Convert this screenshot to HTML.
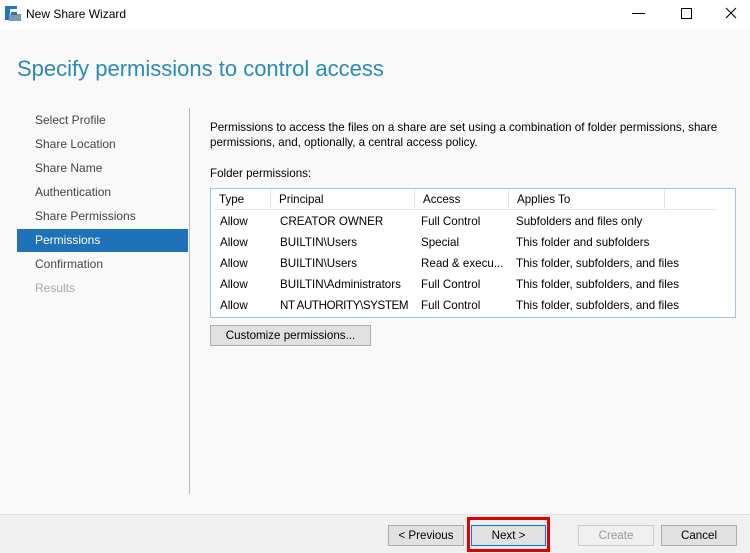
<!DOCTYPE html>
<html><head><style>
*{margin:0;padding:0;box-sizing:border-box}
body{width:750px;height:553px;overflow:hidden;background:#f9f9f9;font-family:"Liberation Sans",sans-serif;font-size:11.6px;color:#000;position:relative}
.a{position:absolute;white-space:nowrap}
.tb{position:absolute;left:0;top:0;width:750px;height:29px;background:#fff}
.nav{left:35px;color:#444;font-size:12px}
.btn{position:absolute;height:21px;border:1px solid #adadad;background:#e1e1e1;text-align:center;line-height:19px}
.hd{position:absolute;top:0;height:21px;border-right:1px solid #e5e5e5;padding-left:8px;line-height:22px}
.row{position:absolute;left:0;height:21px;line-height:21px}
.row span{position:absolute}
</style></head><body>
<div class="tb"></div>
<svg class="a" style="left:5px;top:6px" width="16" height="16"><rect x="0" y="0" width="5" height="14" fill="#1e78c8"/><rect x="0" y="0" width="12" height="3" fill="#1e78c8"/><rect x="4" y="8" width="12" height="7" fill="#7a9ab5"/><rect x="6" y="6" width="6" height="3" fill="#4a6a85"/></svg>
<div class="a" style="left:26px;top:7px;font-size:12px">New Share Wizard</div>
<svg class="a" style="left:625px;top:5px" width="120" height="18"><line x1="7" y1="8.5" x2="20" y2="8.5" stroke="#000"/><rect x="56.5" y="3.5" width="10" height="10" fill="none" stroke="#000"/><path d="M101 3 L111 13 M111 3 L101 13" stroke="#000" stroke-width="1.1"/></svg>
<div class="a" style="left:17px;top:56px;font-size:22px;color:#2a8ab8">Specify permissions to control access</div>
<div class="a nav" style="top:113px">Select Profile</div>
<div class="a nav" style="top:137px">Share Location</div>
<div class="a nav" style="top:161px">Share Name</div>
<div class="a nav" style="top:185px">Authentication</div>
<div class="a nav" style="top:209px">Share Permissions</div>
<div class="a" style="left:17px;top:229px;width:171px;height:23px;background:#1e72b8"></div>
<div class="a nav" style="top:233px;color:#fff">Permissions</div>
<div class="a nav" style="top:257px">Confirmation</div>
<div class="a nav" style="top:281px;color:#aaa">Results</div>
<div class="a" style="left:189px;top:108px;width:1px;height:386px;background:#bbb"></div>
<div class="a" style="left:210px;top:120px;line-height:15px">Permissions to access the files on a share are set using a combination of folder permissions, share<br>permissions, and, optionally, a central access policy.</div>
<div class="a" style="left:210px;top:167px">Folder permissions:</div>
<div class="a" style="left:210px;top:188px;width:526px;height:130px;border:1px solid #a5c4dc;background:#fff">
<div class="hd" style="left:0;width:60px">Type</div>
<div class="hd" style="left:60px;width:144px">Principal</div>
<div class="hd" style="left:204px;width:94px">Access</div>
<div class="hd" style="left:298px;width:156px">Applies To</div>
<div class="a" style="left:3px;top:20px;width:503px;height:1px;background:#e5e5e5"></div>
<div class="row" style="top:22px"><span style="left:9px">Allow</span><span style="left:69px">CREATOR OWNER</span><span style="left:210px">Full Control</span><span style="left:305px">Subfolders and files only</span></div>
<div class="row" style="top:43px"><span style="left:9px">Allow</span><span style="left:69px">BUILTIN\Users</span><span style="left:210px">Special</span><span style="left:305px">This folder and subfolders</span></div>
<div class="row" style="top:64px"><span style="left:9px">Allow</span><span style="left:69px">BUILTIN\Users</span><span style="left:210px">Read &amp; execu...</span><span style="left:305px">This folder, subfolders, and files</span></div>
<div class="row" style="top:85px"><span style="left:9px">Allow</span><span style="left:69px">BUILTIN\Administrators</span><span style="left:210px">Full Control</span><span style="left:305px">This folder, subfolders, and files</span></div>
<div class="row" style="top:106px"><span style="left:9px">Allow</span><span style="left:69px;letter-spacing:-0.4px">NT AUTHORITY\SYSTEM</span><span style="left:210px">Full Control</span><span style="left:305px">This folder, subfolders, and files</span></div>
</div>
<div class="btn" style="left:210px;top:325px;width:161px">Customize permissions...</div>
<div class="a" style="left:0;top:514px;width:750px;height:39px;background:#f0f0f0;border-top:1px solid #dfdfdf"></div>
<div class="btn" style="left:388px;top:525px;width:76px">&lt; Previous</div>
<div class="a" style="left:467px;top:517px;width:83px;height:35px;border:3px solid #e00000"></div>
<div class="btn" style="left:471px;top:525px;width:75px;border-color:#0078d7">Next &gt;</div>
<div class="btn" style="left:578px;top:525px;width:76px;border-color:#ccc;background:#f0f0f0;color:#999">Create</div>
<div class="btn" style="left:661px;top:525px;width:76px">Cancel</div>
</body></html>
